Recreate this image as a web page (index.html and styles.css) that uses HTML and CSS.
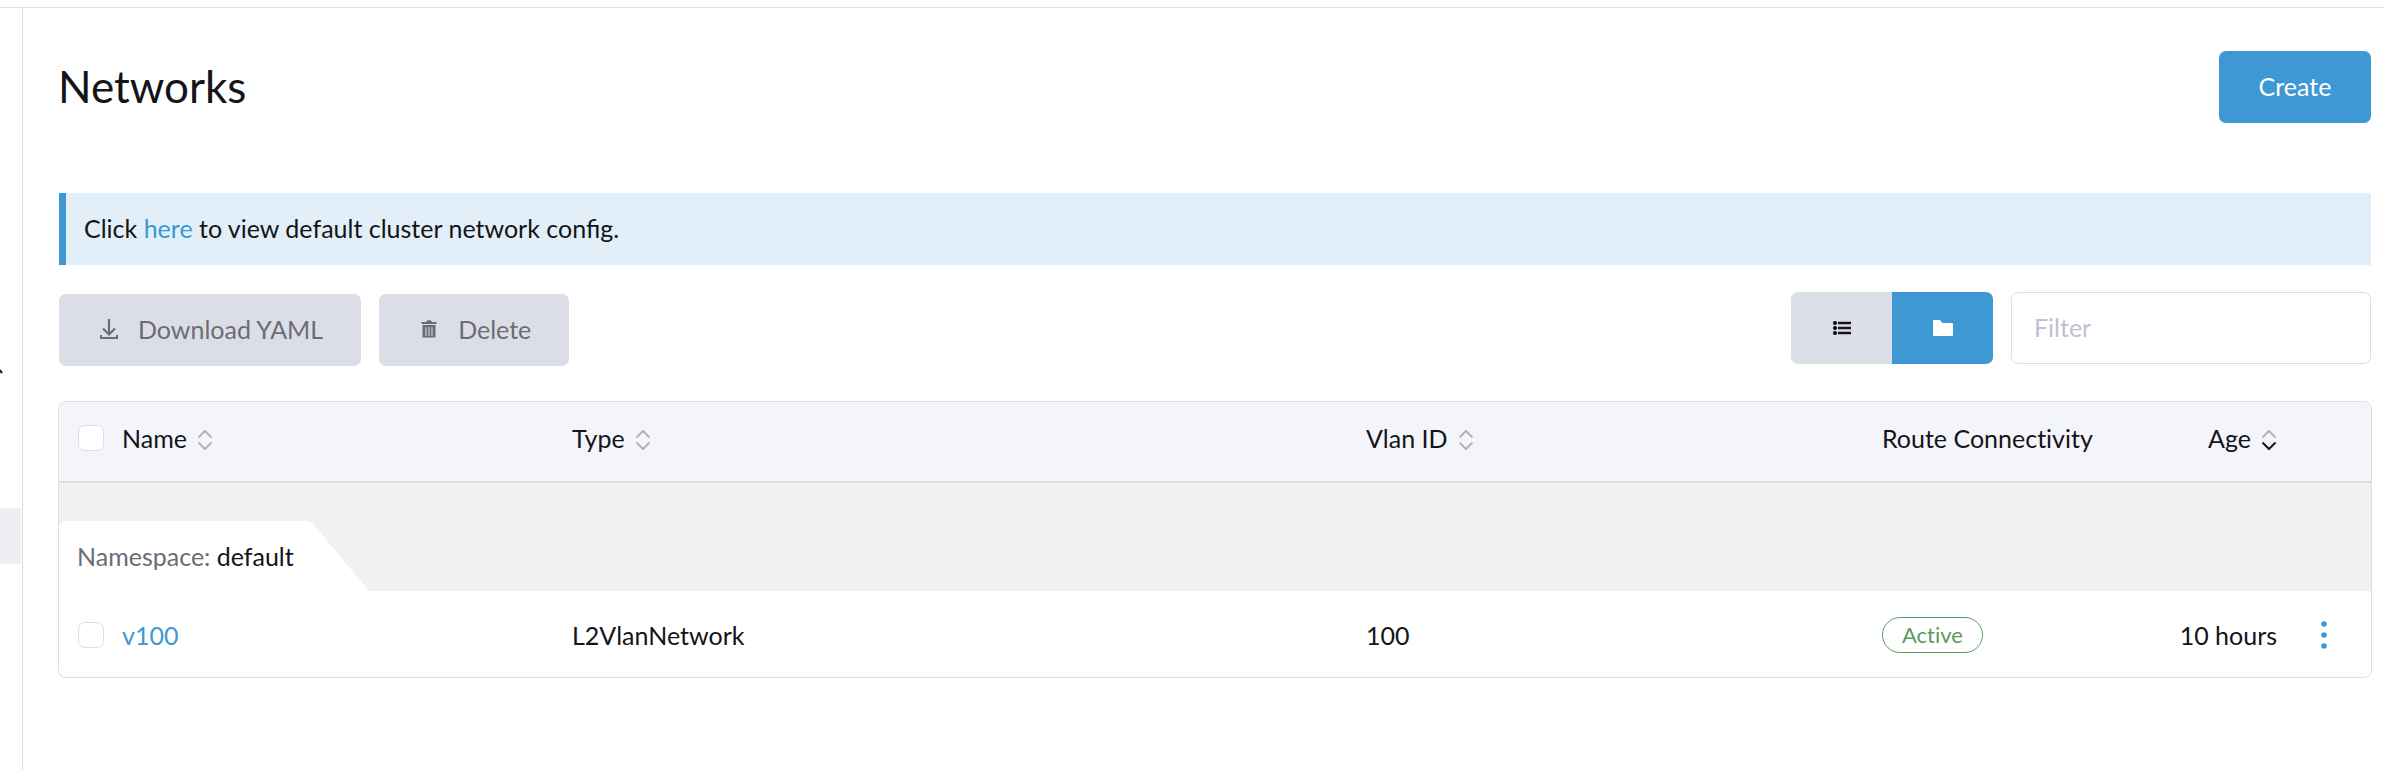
FILE: index.html
```html
<!DOCTYPE html>
<html lang="en">
<head>
<meta charset="utf-8">
<title>Networks</title>
<link rel="stylesheet" href="styles.css">
</head>
<body>
<header class="topbar"></header>
<div class="layout">
  <nav class="side" aria-label="Sections">
    <svg class="side-chevron" width="12" height="10" viewBox="0 0 12 10"><path d="M1 9 6 3 11 9" fill="none" stroke="#141419" stroke-width="2"/></svg>
    <div class="side-current"></div>
  </nav>
  <main class="main">
    <div class="title-row">
      <h1 class="title">Networks</h1>
      <button class="btn primary" type="button">Create</button>
    </div>
    <p class="banner">Click <a class="link" href="#config">here</a> to view default cluster network config.</p>
    <div class="toolbar">
      <div class="bulk">
        <button class="btn muted" type="button">
          <svg class="btn-icon" width="20" height="22" viewBox="0 0 20 22"><path d="M10 1v15M4 10.500 10 16.500 16 10.500" fill="none" stroke="currentColor" stroke-width="2.200"/><path d="M2 17v3h16v-3" fill="none" stroke="currentColor" stroke-width="2"/></svg>
          Download YAML
        </button>
        <button class="btn muted" type="button">
          <svg class="btn-icon" width="20" height="22" viewBox="0 0 20 22"><path d="M2.500 4H7q1-2 3-2t3 2h4.500v2h-15zM3.500 7h13v12.500h-13z" fill="currentColor"/><path d="M7 9v9M10 9v9M13 9v9" stroke="#dcdee7" stroke-width="1"/></svg>
          Delete
        </button>
      </div>
      <div class="search">
        <div class="toggle">
          <button class="toggle-btn" type="button" aria-label="Flat list">
            <svg width="20" height="16" viewBox="0 0 20 16"><path d="M6 3h13M6 8h13M6 13h13" stroke="#141419" stroke-width="2.600"/><circle cx="3" cy="3" r="2"/><circle cx="3" cy="8" r="2"/><circle cx="3" cy="13" r="2"/></svg>
          </button>
          <button class="toggle-btn on" type="button" aria-label="Group by namespace">
            <svg width="22" height="18" viewBox="0 0 22 18"><path d="M2 1h6l2.500 3H20q1 0 1 1v11q0 1-1 1H2q-1 0-1-1V2q0-1 1-1z" fill="#fff"/></svg>
          </button>
        </div>
        <input class="filter" type="search" placeholder="Filter" aria-label="Filter">
      </div>
    </div>
    <div class="table-frame">
      <table class="table">
        <colgroup><col class="c-check"><col class="c-name"><col class="c-type"><col class="c-vlan"><col class="c-route"><col class="c-age"><col class="c-menu"></colgroup>
        <thead>
          <tr>
            <th class="check-cell"><input class="check" type="checkbox" aria-label="Select all"></th>
            <th><span class="sort">Name <svg class="arrows" width="16" height="22" viewBox="0 0 16 22"><path class="up" d="M1.500 8.500 8 2l6.500 6.500"/><path class="down" d="M1.500 13.500 8 20l6.500-6.500"/></svg></span></th>
            <th><span class="sort">Type <svg class="arrows" width="16" height="22" viewBox="0 0 16 22"><path class="up" d="M1.500 8.500 8 2l6.500 6.500"/><path class="down" d="M1.500 13.500 8 20l6.500-6.500"/></svg></span></th>
            <th><span class="sort">Vlan ID <svg class="arrows" width="16" height="22" viewBox="0 0 16 22"><path class="up" d="M1.500 8.500 8 2l6.500 6.500"/><path class="down" d="M1.500 13.500 8 20l6.500-6.500"/></svg></span></th>
            <th>Route Connectivity</th>
            <th><span class="sort desc">Age <svg class="arrows" width="16" height="22" viewBox="0 0 16 22"><path class="up" d="M1.500 8.500 8 2l6.500 6.500"/><path class="down" d="M1.500 13.500 8 20l6.500-6.500"/></svg></span></th>
            <th></th>
          </tr>
        </thead>
        <tbody>
          <tr class="group">
            <td colspan="7"><div class="tab"><span class="tab-label">Namespace:</span> default</div></td>
          </tr>
          <tr class="row">
            <td class="check-cell"><input class="check" type="checkbox" aria-label="Select v100"></td>
            <td><a class="link" href="#v100">v100</a></td>
            <td>L2VlanNetwork</td>
            <td>100</td>
            <td><span class="badge">Active</span></td>
            <td class="age">10 hours</td>
            <td><button class="menu" type="button" aria-label="Actions"><svg width="6" height="28" viewBox="0 0 6 28"><circle cx="3" cy="3" r="2.800"/><circle cx="3" cy="14" r="2.800"/><circle cx="3" cy="25" r="2.800"/></svg></button></td>
          </tr>
        </tbody>
      </table>
    </div>
  </main>
</div>
</body>
</html>
```
FILE: styles.css
```css
* { box-sizing: border-box; }
body {
  margin: 0;
  min-height: 100vh;
  display: flex;
  flex-direction: column;
  background: #fff;
  color: #141419;
  font: 25px/30px Lato, "Open Sans", sans-serif;
}
button, input { font: inherit; }
svg { display: block; flex: none; }
.link { color: #3d98d3; text-decoration: none; }
.topbar { height: 8px; border-bottom: 1px solid #dcdee7; }
.layout { flex: 1; display: flex; }
.side { width: 23px; flex: none; border-right: 1px solid #dcdee7; padding-top: 356px; overflow: hidden; }
.side-chevron { margin-left: -9px; }
.side-current { width: 21px; height: 56px; margin-top: 134px; background: #eeeff4; }
.main { flex: 1; min-width: 0; padding: 43px 12px 0 35px; }
.title-row { display: flex; align-items: center; justify-content: space-between; }
.title { margin: 0; padding-bottom: 2px; font-size: 44px; line-height: 52px; font-weight: 400; }
.btn {
  display: flex;
  align-items: center;
  justify-content: center;
  height: 72px;
  padding: 0 38px 2px;
  border: 0;
  border-radius: 7px;
}
.primary { min-width: 152px; margin-right: 1px; background: #3d98d3; color: #fff; }
.muted { background: #dcdee7; color: #6c6c76; }
.btn-icon { margin: 0 19px 0 2px; }
.banner {
  margin: 70px 1px 0;
  padding: 20px 18px 22px;
  border-left: 7px solid #3d98d3;
  background: #e2eff8;
}
.toolbar { display: flex; justify-content: space-between; margin: 27px 1px 0; }
.bulk { display: flex; gap: 18px; padding-top: 2px; }
.search { display: flex; gap: 18px; }
.toggle { display: flex; }
.toggle-btn {
  display: flex;
  align-items: center;
  justify-content: center;
  width: 101px;
  height: 72px;
  border: 0;
  border-radius: 7px 0 0 7px;
  background: #dcdee7;
}
.toggle-btn.on { border-radius: 0 7px 7px 0; background: #3d98d3; }
.filter {
  width: 360px;
  height: 72px;
  padding: 0 22px 2px;
  border: 1px solid #dcdee7;
  border-radius: 7px;
  background: #fff;
  color: #141419;
}
.filter::placeholder { color: #bfc1d2; opacity: 1; }
.table-frame { margin-top: 35px; border: 1px solid #dcdee7; border-radius: 8px; overflow: hidden; }
.table { width: 100%; table-layout: fixed; border-collapse: separate; border-spacing: 0; }
.c-check { width: 63px; }
.c-name { width: 450px; }
.c-vlan { width: 516px; }
.c-route { width: 230px; }
.c-age { width: 165px; }
.c-menu { width: 94px; }
th, td { padding: 0; text-align: left; font-weight: 400; vertical-align: middle; white-space: nowrap; }
th {
  height: 81px;
  padding-bottom: 8px;
  background: #f4f5fa;
  border-bottom: 2px solid #dcdee7;
  font-variant-ligatures: no-common-ligatures;
}
.check-cell { padding-left: 19px; }
.check {
  display: block;
  appearance: none;
  width: 26px;
  height: 26px;
  margin: 0;
  border: 1px solid #dcdee7;
  border-radius: 7px;
  background: #fff;
}
.sort { display: flex; align-items: center; gap: 10px; }
.arrows { margin-top: 4px; fill: none; stroke: #b3b4ba; stroke-width: 2; }
.desc { justify-content: flex-end; }
.desc .down { stroke: #141419; }
.age { text-align: right; }
.group td { padding-top: 38px; background: #f1f1f1; }
.tab {
  width: 310px;
  height: 70px;
  padding: 20px 0 0 18px;
  border-radius: 7px 0 0;
  background: #fff;
  clip-path: polygon(0 0, 250px 0, 255px 4px, 310px 100%, 0 100%);
}
.tab-label { color: #6c6c76; }
.row td { height: 86px; padding-top: 2px; }
.badge {
  display: inline-block;
  padding: 2px 19px;
  border: 1px solid #5d995d;
  border-radius: 18px;
  color: #5d995d;
  font-size: 22px;
  font-variant-ligatures: no-common-ligatures;
  vertical-align: middle;
}
.menu { display: block; margin: 0 auto; padding: 0; border: 0; background: none; fill: #3d98d3; }
```
